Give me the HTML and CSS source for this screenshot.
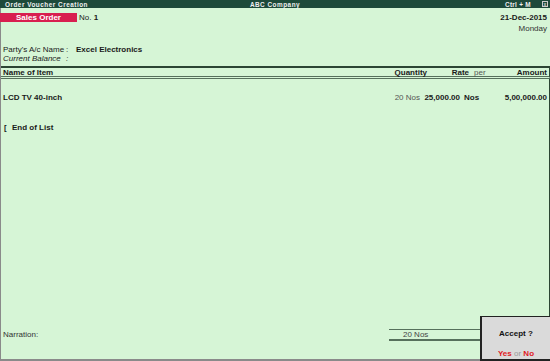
FILE: index.html
```html
<!DOCTYPE html>
<html>
<head>
<meta charset="utf-8">
<link rel="stylesheet" href="styles.css">
</head>
<body>
<div class="screen">
  <div class="titlebar">
    <span class="tb-left">Order Voucher Creation</span>
    <span class="tb-center">ABC Company</span>
    <span class="tb-right">Ctrl + M <span class="closebox">x</span></span>
  </div>
  <div class="main">
    <div class="vhead">
      <div class="vtype">
        <span class="vlabel">Sales Order</span>
        <span class="vno">No. <b>1</b></span>
      </div>
      <div class="vdate">
        <b>21-Dec-2015</b>
        <span>Monday</span>
      </div>
    </div>
    <div class="party">
      <div class="prow"><span class="plabel">Party's A/c Name</span><span class="pcolon">:</span><b>Excel Electronics</b></div>
      <div class="prow ital"><span class="plabel">Current Balance</span><span class="pcolon">:</span></div>
    </div>
    <div class="thead">
      <span class="c-name">Name of Item</span>
      <span class="h-qty">Quantity</span>
      <span class="h-rate">Rate</span>
      <span class="h-per light">per</span>
      <span class="c-amt">Amount</span>
    </div>
    <div class="body">
      <div class="item">
        <span class="c-name b">LCD TV 40-inch</span>
        <span class="i-qty light">20 Nos</span>
        <span class="i-rate b">25,000.00</span>
        <span class="i-per b">Nos</span>
        <span class="c-amt b">5,00,000.00</span>
      </div>
      <div class="eol"><span class="marker">[</span><b>End of List</b></div>
    </div>
    <div class="footer">
      <span class="narr">Narration:</span>
      <div class="total"><span>20 Nos</span></div>
    </div>
    <div class="accept">
      <b class="aq">Accept ?</b>
      <div class="yn"><b class="red">Yes</b> <span class="or">or</span> <b class="red">No</b></div>
    </div>
  </div>
</div>
</body>
</html>
```
FILE: styles.css
```css
* { box-sizing: border-box; }
html, body { margin: 0; padding: 0; }
body {
  width: 550px;
  height: 361px;
  overflow: hidden;
  background: #d6f5d6;
  font-family: "Liberation Sans", Arial, sans-serif;
  font-size: 8px;
  color: #1a1a1a;
}
.screen {
  width: 550px;
  height: 361px;
  display: flex;
  flex-direction: column;
}
.titlebar {
  height: 8px;
  background: #1d4a3a;
  color: #f0f0f0;
  display: flex;
  align-items: center;
  justify-content: space-between;
  font-size: 6.4px;
  font-weight: bold;
  letter-spacing: 0.5px;
  padding: 0 2px 0 5px;
  position: relative;
}
.tb-center {
  position: absolute;
  left: 0; right: 0;
  text-align: center;
}
.tb-right { display: flex; align-items: center; gap: 11px; letter-spacing: 0.3px; }
.closebox {
  display: inline-block;
  width: 6px; height: 6px;
  border: 1px solid #ccc;
  color: #ccc;
  font-size: 5px;
  line-height: 4px;
  text-align: center;
  letter-spacing: 0;
}
.main {
  flex: 1;
  display: flex;
  flex-direction: column;
  border-left: 1px solid #8a8a8a;
  border-bottom: 2px solid #8a8a8a;
  position: relative;
}
.vhead {
  display: flex;
  justify-content: space-between;
  padding-top: 5px;
  height: 35px;
}
.vtype { display: flex; align-items: center; height: 9px; }
.vlabel {
  width: 77px;
  height: 9px;
  background: #d81e4f;
  color: #fff;
  font-weight: bold;
  text-align: center;
  line-height: 9px;
  margin-left: -1px;
}
.vno { margin-left: 2px; }
.vdate {
  display: flex;
  flex-direction: column;
  align-items: flex-end;
  padding-right: 3px;
  gap: 2px;
}
.vdate span { color: #333; }
.party { padding-left: 2px; height: 23px; padding-top: 2px; }
.prow { display: flex; height: 9px; align-items: center; }
.plabel { width: 63px; }
.pcolon { width: 10px; }
.ital { font-style: italic; }
.thead {
  display: flex;
  align-items: center;
  height: 13px;
  border-top: 2px solid #2c4533;
  border-bottom: 3px double #56705c;
  font-weight: bold;
  padding: 0 2px 0 2px;
  border-right: 1px solid #2c4533;
}
.c-name { flex: 1; }
.h-qty { width: 36px; text-align: right; }
.h-rate { width: 40px; text-align: right; margin-left: 2px; }
.h-per { width: 21px; padding-left: 5px; }
.c-amt { width: 57px; text-align: right; }
.i-qty { width: 31px; text-align: right; padding-right: 1px; }
.i-rate { width: 40px; text-align: right; padding-right: 1px; }
.i-per { width: 29px; padding-left: 3px; }
.light { font-weight: normal; color: #555; }
.b { font-weight: bold; }
.body {
  flex: 1;
  padding: 14px 2px 0 2px;
  border-right: 1px solid #2c4533;
}
.item { display: flex; height: 9px; align-items: center; }
.eol { margin-top: 21px; display: flex; align-items: center; height: 9px; }
.marker { font-weight: bold; width: 9px; padding-left: 1px; }
.footer {
  height: 31px;
  display: flex;
  align-items: flex-start;
  padding-top: 1px;
  padding-left: 2px;
}
.narr { width: 386px; color: #333; line-height: 9px; padding-top: 1px; }
.total {
  width: 92px;
  height: 12px;
  border-top: 1px solid #56705c;
  border-bottom: 2px solid #56705c;
  padding-left: 14px;
  line-height: 9px;
  color: #444;
}
.accept {
  position: absolute;
  right: -1px;
  bottom: -2px;
  width: 71px;
  height: 45px;
  background: #dadada;
  border: 1px solid #222;
  border-width: 1px 1px 2px 2px;
  display: flex;
  flex-direction: column;
  align-items: center;
  justify-content: space-between;
  padding: 12px 0 1px;
}
.aq { color: #111; }
.red { color: #e0191e; }
.or { color: #999; }
```
